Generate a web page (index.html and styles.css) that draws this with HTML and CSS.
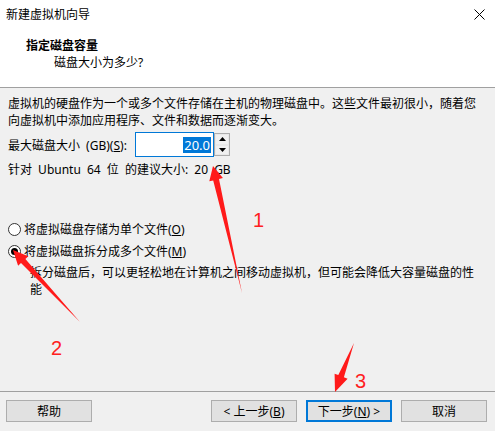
FILE: index.html
```html
<!DOCTYPE html>
<html>
<head>
<meta charset="utf-8">
<link rel="stylesheet" href="styles.css">
</head>
<body>
<div class="win">
  <div class="top">
    <div class="titlebar">
      <span class="title">新建虚拟机向导</span>
      <svg class="close" width="11" height="11" viewBox="0 0 11 11"><path d="M0.5 0.5 L10.5 10.5 M10.5 0.5 L0.5 10.5" stroke="#000" stroke-width="1" fill="none"/></svg>
    </div>
    <div class="header">
      <div class="h1">指定磁盘容量</div>
      <div class="h2">磁盘大小为多少?</div>
    </div>
  </div>
  <div class="content">
    <p class="para">虚拟机的硬盘作为一个或多个文件存储在主机的物理磁盘中。这些文件最初很小，随着您向虚拟机中添加应用程序、文件和数据而逐渐变大。</p>
    <div class="sizerow">
      <span class="lbl">最大磁盘大小 (GB)(<u>S</u>):</span>
      <div class="input"><span class="sel">20.0</span></div>
      <div class="spin">
        <div class="sbtn"><svg width="7" height="4" viewBox="0 0 7 4"><path d="M3.5 0 L7 4 L0 4 Z" fill="#000"/></svg></div>
        <div class="sbtn"><svg width="7" height="4" viewBox="0 0 7 4"><path d="M0 0 L7 0 L3.5 4 Z" fill="#000"/></svg></div>
      </div>
    </div>
    <div class="rec">针对 Ubuntu 64 位 的建议大小: 20 GB</div>
    <div class="radios">
      <div class="radio"><span class="circle"></span><span>将虚拟磁盘存储为单个文件(<u>O</u>)</span></div>
      <div class="radio"><span class="circle on"><span class="dot"></span></span><span>将虚拟磁盘拆分成多个文件(<u>M</u>)</span></div>
      <p class="desc">拆分磁盘后，可以更轻松地在计算机之间移动虚拟机，但可能会降低大容量磁盘的性能</p>
    </div>
  </div>
  <div class="footer">
    <button class="btn">帮助</button>
    <div class="spacer"></div>
    <button class="btn">&lt; 上一步(<u>B</u>)</button>
    <button class="btn primary">下一步(<u>N</u>) &gt;</button>
    <button class="btn">取消</button>
  </div>
  <svg class="annot" width="495" height="431" viewBox="0 0 495 431">
    <polygon fill="#ff1a1a" points="213,166 209.3,181.3 213.2,180.4 242,293 219,179 222.9,178.1"/>
    <polygon fill="#ff1a1a" points="13,250 18.1,265.8 21,263 80,322 25.4,259 28.3,256.2"/>
    <polygon fill="#ff1a1a" points="335,392 334.6,373.7 338.3,375.1 354,343 343.9,377.3 347.6,378.7"/>
  </svg>
  <span class="num n1">1</span>
  <span class="num n2">2</span>
  <span class="num n3">3</span>
</div>
</body>
</html>
```

FILE: styles.css
```css
* { box-sizing: border-box; }
html, body { margin: 0; padding: 0; }
body {
  background: #f0f0f0;
  font-family: "Noto Sans", "Noto Sans CJK SC", sans-serif;
  font-size: 12px;
  color: #000;
}
.win {
  position: relative;
  width: 495px;
  height: 431px;
  overflow: hidden;
  display: flex;
  flex-direction: column;
}
.top {
  background: #fff;
  height: 88px;
  border-bottom: 1px solid #a0a0a0;
  flex: none;
}
.titlebar {
  height: 30px;
  display: flex;
  align-items: center;
  justify-content: space-between;
  padding: 0 10px 2px 6px;
}
.title { line-height: 17px; }
.close { display: block; }
.header { padding: 8px 0 0 26px; }
.h1 { font-weight: bold; line-height: 16px; }
.h2 { padding-left: 28px; line-height: 17px; }
.content {
  flex: 1;
  padding: 7px 8px 0 8px;
}
.para { margin: 0; line-height: 17px; }
.sizerow {
  display: flex;
  align-items: center;
  margin-top: 3px;
  height: 25px;
}
.lbl { width: 127px; line-height: 17px; padding-top: 2px; white-space: nowrap; word-spacing: 3px; }
.input {
  width: 79px;
  height: 25px;
  border: 1px solid #0078d7;
  background: #fff;
  display: flex;
  align-items: center;
  justify-content: flex-end;
  padding-right: 2px;
}
.sel {
  background: #0078d7;
  color: #fff;
  font-size: 13px;
  line-height: 16px;
  padding: 0 1px;
}
.spin {
  width: 16px;
  height: 23px;
  border: 1px solid #adadad;
  display: flex;
  flex-direction: column;
  background: #f0f0f0;
}
.sbtn {
  flex: 1;
  display: flex;
  align-items: center;
  justify-content: center;
  border: 1px solid #e8e8e8;
}
.sbtn svg { display: block; }
.rec { margin-top: 4px; line-height: 17px; word-spacing: 3px; }
.radios { margin-top: 40px; }
.radio {
  display: flex;
  align-items: center;
  height: 22px;
}
.circle {
  width: 13px;
  height: 13px;
  border: 1px solid #333;
  border-radius: 50%;
  background: #fff;
  margin-right: 3px;
  display: flex;
  align-items: center;
  justify-content: center;
}
.dot {
  width: 7px;
  height: 7px;
  border-radius: 50%;
  background: #000;
}
.desc {
  margin: 2px 0 0 22px;
  line-height: 17px;
  width: 450px;
}
.footer {
  flex: none;
  height: 40px;
  border-top: 1px solid #a0a0a0;
  display: flex;
  align-items: flex-start;
  padding: 8px 8px 0 6px;
  gap: 9px;
}
.spacer { flex: 1; }
.btn {
  width: 86px;
  height: 22px;
  border: 1px solid #adadad;
  background: #e1e1e1;
  font-family: inherit;
  font-size: 12px;
  color: #000;
  padding: 0;
  line-height: 17px;
}
.btn.primary { border: 2px solid #0078d7; }
.annot { position: absolute; left: 0; top: 0; pointer-events: none; }
.num {
  position: absolute;
  color: #ff2020;
  font-family: "Liberation Sans", sans-serif;
  font-size: 20px;
  line-height: 20px;
}
.n1 { left: 253px; top: 210px; }
.n2 { left: 51px; top: 338px; }
.n3 { left: 355px; top: 371px; }
```
